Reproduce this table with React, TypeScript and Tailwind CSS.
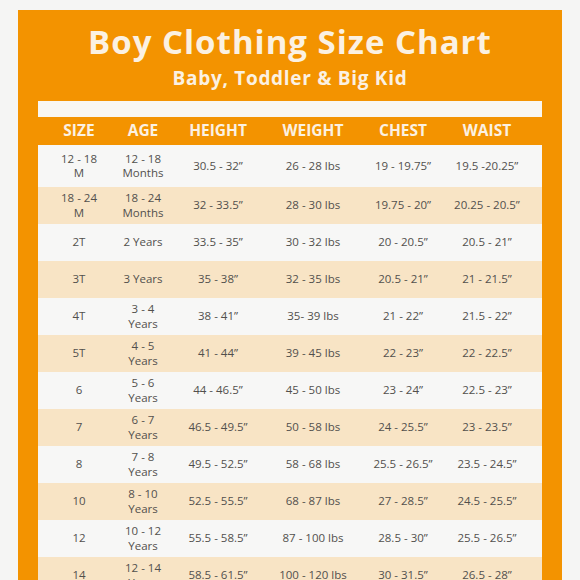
import React from "react";

const rows: string[][] = [
  ["12 - 18\nM", "12 - 18\nMonths", "30.5 - 32”", "26 - 28 lbs", "19 - 19.75”", "19.5 -20.25”"],
  ["18 - 24\nM", "18 - 24\nMonths", "32 - 33.5”", "28 - 30 lbs", "19.75 - 20”", "20.25 - 20.5”"],
  ["2T", "2 Years", "33.5 - 35”", "30 - 32 lbs", "20 - 20.5”", "20.5 - 21”"],
  ["3T", "3 Years", "35 - 38”", "32 - 35 lbs", "20.5 - 21”", "21 - 21.5”"],
  ["4T", "3 - 4\nYears", "38 - 41”", "35- 39 lbs", "21 - 22”", "21.5 - 22”"],
  ["5T", "4 - 5\nYears", "41 - 44”", "39 - 45 lbs", "22 - 23”", "22 - 22.5”"],
  ["6", "5 - 6\nYears", "44 - 46.5”", "45 - 50 lbs", "23 - 24”", "22.5 - 23”"],
  ["7", "6 - 7\nYears", "46.5 - 49.5”", "50 - 58 lbs", "24 - 25.5”", "23 - 23.5”"],
  ["8", "7 - 8\nYears", "49.5 - 52.5”", "58 - 68 lbs", "25.5 - 26.5”", "23.5 - 24.5”"],
  ["10", "8 - 10\nYears", "52.5 - 55.5”", "68 - 87 lbs", "27 - 28.5”", "24.5 - 25.5”"],
  ["12", "10 - 12\nYears", "55.5 - 58.5”", "87 - 100 lbs", "28.5 - 30”", "25.5 - 26.5”"],
  ["14", "12 - 14\nYears", "58.5 - 61.5”", "100 - 120 lbs", "30 - 31.5”", "26.5 - 28”"],
];

const headers = ["SIZE", "AGE", "HEIGHT", "WEIGHT", "CHEST", "WAIST"];
const cols = "grid grid-cols-[82px_46px_104px_86px_94px_74px_18px]";

export default function App() {
  return (
    <div
      className="w-[580px] h-[580px] overflow-hidden bg-[#f5f5f4] pt-[10px] px-[18px]"
      style={{ fontFamily: "'Open Sans', 'Liberation Sans', sans-serif" }}
    >
      <div className="bg-[#f39300] px-[20px] pt-[14px] h-[600px]">
        <div className="text-center text-[#fbf1e2] font-bold text-[33px] leading-[36px] tracking-[1px]">
          Boy Clothing Size Chart
        </div>
        <div className="text-center text-[#fbf1e2] font-bold text-[19px] leading-[22px] tracking-[0.7px] mt-[7px]">
          Baby, Toddler &amp; Big Kid
        </div>
        <div className="mt-[12px] h-[16px] bg-[#f8f6f1]" />
        <div className={`${cols} h-[28px] items-center text-[#fbf1e2] font-bold text-[15.5px]`}>
          {headers.map((h) => (
            <div key={h} className="text-center">
              {h}
            </div>
          ))}
          <div />
        </div>
        <div className="flex flex-col">
          {rows.map((r, i) => (
            <div
              key={i}
              className={`${cols} items-center text-[#52504d] text-[11.5px] leading-[14.5px] ${
                i === 0 ? "h-[42px]" : "h-[37px]"
              } ${i % 2 === 0 ? "bg-[#f7f7f6]" : "bg-[#f8e4c5]"}`}
            >
              {r.map((c, j) => (
                <div key={j} className="text-center whitespace-pre-line">
                  {c}
                </div>
              ))}
              <div />
            </div>
          ))}
        </div>
      </div>
    </div>
  );
}
